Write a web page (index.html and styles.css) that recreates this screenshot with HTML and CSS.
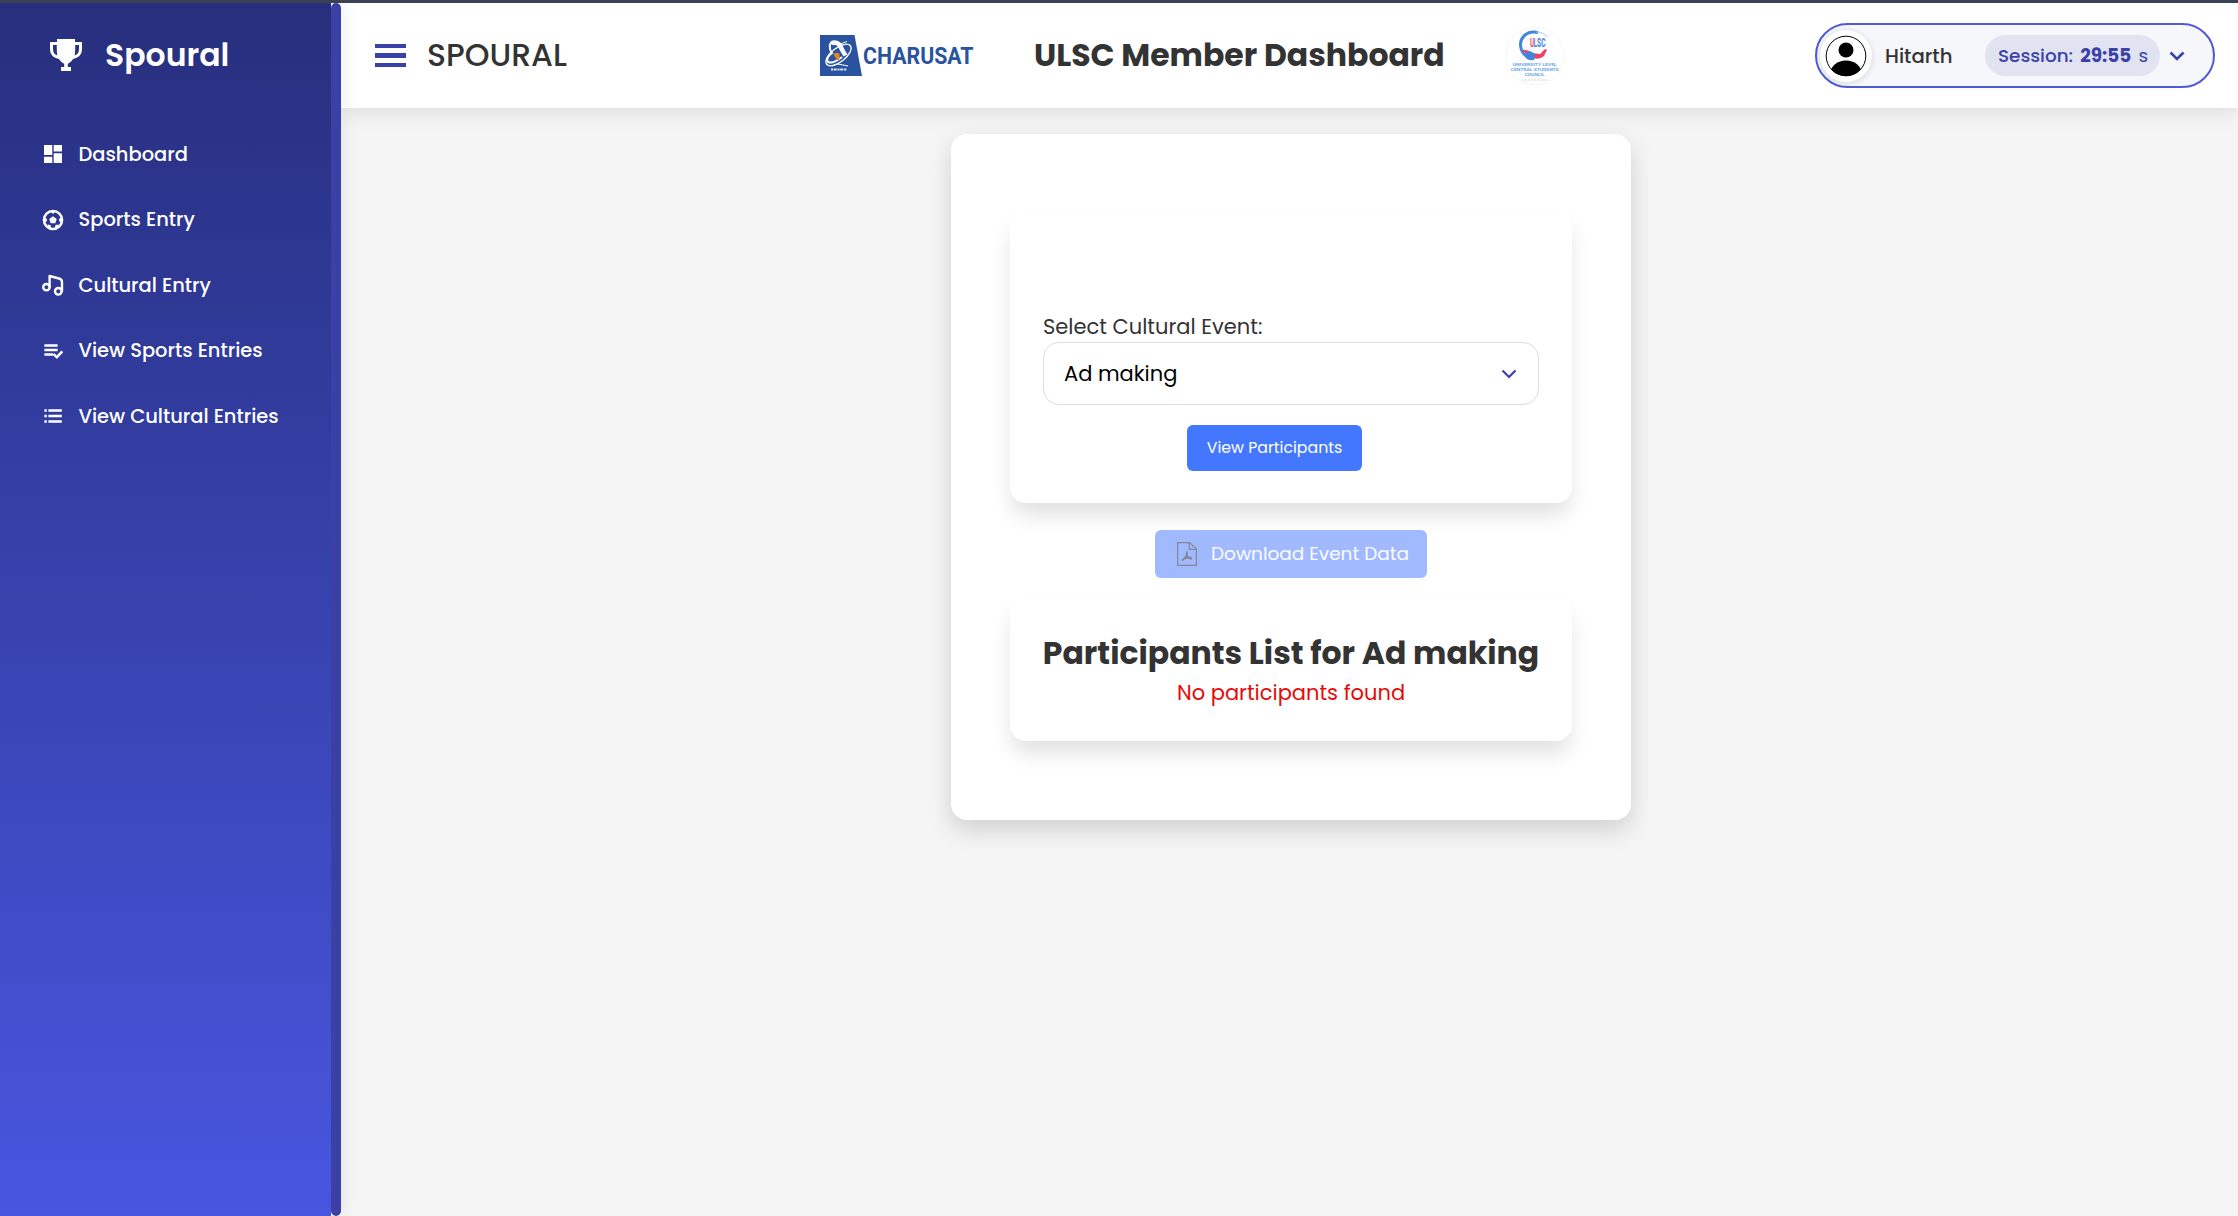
FILE: index.html
```
<!DOCTYPE html>
<html lang="en">
<head>
<meta charset="utf-8">
<title>Spoural</title>
<link rel="stylesheet" href="styles.css">
</head>
<body>
<div class="app">
  <aside class="sidebar">
    <div class="sidebar-inner">
      <div class="brand">
        <svg class="trophy" viewBox="0 0 32 32"><path fill="#fff" d="M7 0h18v3h7v7c0 6-4 9-9 10-1.500 2.600-3.500 4-5.200 4.700V28H21v4H11v-4h3.200v-3.300C12.500 24 10.500 22.600 9 20 4 19 0 16 0 10V3h7zM3 6v4c0 3.500 1.500 5.500 4.300 6.500C6.800 13 6.700 9 6.800 6zm22.200 0c.1 3 0 7-.5 10.500C27.500 15.500 29 13.500 29 10V6z"/></svg>
        <span class="brand-name">Spoural</span>
      </div>
      <nav class="menu">
        <a class="item"><svg viewBox="0 0 24 24" fill="#fff"><path d="M3 3h8.300v10H3zM12.700 3H21v6.600h-8.300zM12.700 11.300H21V21h-8.300zM3 14.700h8.300V21H3z"/></svg><span>Dashboard</span></a>
        <a class="item"><svg viewBox="0 0 24 24"><circle cx="12" cy="12" r="9.100" fill="none" stroke="#fff" stroke-width="2.500"/><path fill="#fff" d="M12 8.200l3.700 2.700-1.400 4.400H9.700l-1.400-4.400zM9.500 3.300h5L12 5.900zM3.600 9.200l2.600 2-1.200 3.200-1.800-.8zM20.400 9.200l-2.600 2 1.200 3.200 1.800-.8zM6.500 16.600l3 .5.7 3.300-3-.8zM17.500 16.600l-3 .5-.7 3.300 3-.8z"/></svg><span>Sports Entry</span></a>
        <a class="item"><svg viewBox="0 0 24 24" fill="none" stroke="#fff" stroke-width="2.400"><circle cx="5.400" cy="14.200" r="3.200"/><circle cx="17.300" cy="18.300" r="3.300"/><path stroke-linejoin="round" d="M8.600 14.200V3l9.400 2.500q3 .8 3 3.500v9.500"/></svg><span>Cultural Entry</span></a>
        <a class="item"><svg viewBox="0 0 24 24" fill="none" stroke="#fff" stroke-width="2.500"><path d="M3.400 6.500h13.200M3.400 11h13.200M3.400 15.500h8.800M12.600 15.200l3.200 3 5.500-5.900"/></svg><span>View Sports Entries</span></a>
        <a class="item"><svg viewBox="0 0 24 24" fill="none" stroke="#fff" stroke-width="2.500"><path d="M3.400 6.500h2.400M7.400 6.500h13.400M3.400 12h2.400M7.400 12h13.400M3.400 17.500h2.400M7.400 17.500h13.400"/></svg><span>View Cultural Entries</span></a>
      </nav>
    </div>
    <div class="scroll-track"><div class="scroll-thumb"></div></div>
  </aside>
  <div class="page">
    <header class="topbar">
      <div class="left">
        <div class="burger"><i></i><i></i><i></i></div>
        <span class="app-name">SPOURAL</span>
      </div>
      <div class="middle">
        <div class="charusat">
          <svg viewBox="0 0 42 41"><path fill="#2a539f" d="M0 0h34.500L42 41H0z"/><ellipse cx="18.500" cy="20" rx="15" ry="7" transform="rotate(-38 18.500 20)" fill="none" stroke="#fff" stroke-width="1.300"/><path fill="none" stroke="#fff" stroke-width="4.500" d="M11.500 9.500c1-3 7-2.500 9 2 1.500 4 4 7 5 9"/><path fill="none" stroke="#fff" stroke-width="2" d="M10 9q-1 5 2 9c-4 2-6 7-4 9 4 2 9-1 14-5"/><path fill="none" stroke="#fff" stroke-width="1" d="M20 9l7-2.500M12 31l6-2 10 2"/><path fill="#e08a1e" d="M13.500 19q4-2.500 6 0v5.500q-2 1-3 0z"/><path stroke="#dfe6f3" stroke-width="2" stroke-dasharray="2 .7 3 .8" d="M11 34.500h16"/></svg>
          <span class="charusat-name">CHARUSAT</span>
        </div>
        <h1>ULSC Member Dashboard</h1>
        <svg class="council" viewBox="0 0 60 60"><circle cx="30" cy="30" r="29" fill="#fff" stroke="#f5f5f5"/><path fill="none" stroke="#3f86dc" stroke-width="3" d="M33 6.500C20 4 13 14 16.500 24c1.500 4 4 6 7 8"/><path fill="none" stroke="#9fc6ef" stroke-width="1" d="M31 6q8 0 11 5"/><path fill="#ea4466" d="M17 24q5-1 10 3l8 1 5-5 2 1-3 6q-4 4-12 2-5-3-10-8z"/><path fill="#3f86dc" d="M20 27l5-2 5 3-1 6q-4 1-7-1z"/><text x="25" y="20.500" font-size="12" textLength="4" lengthAdjust="spacingAndGlyphs" fill="#ea4466" font-weight="700">U</text><text x="28.500" y="20.500" font-size="12" textLength="12" lengthAdjust="spacingAndGlyphs" fill="#3f86dc" font-weight="700">LSC</text><g font-weight="700" font-size="4.400" fill="#69a7e6" text-anchor="middle"><text x="29.700" y="40" textLength="44" lengthAdjust="spacingAndGlyphs">UNIVERSITY LEVEL</text><text x="29.700" y="45.200" textLength="48" lengthAdjust="spacingAndGlyphs">CENTRAL STUDENTS</text><text x="29.700" y="50.400" textLength="20" lengthAdjust="spacingAndGlyphs">COUNCIL</text></g><path stroke="#d0d0d0" stroke-width="1" stroke-dasharray="2 1" d="M17 54h25"/></svg>
      </div>
      <div class="user">
        <div class="avatar"><svg viewBox="0 0 42 42"><defs><clipPath id="face"><circle cx="21" cy="21" r="20"/></clipPath></defs><circle cx="21" cy="21" r="19.800" fill="#fff" stroke="#000" stroke-width="1"/><circle cx="21" cy="15" r="7.500"/><ellipse cx="21" cy="38" rx="15.500" ry="12.500" clip-path="url(#face)"/></svg></div>
        <span class="user-name">Hitarth</span>
        <div class="session"><span>Session:</span><b>29:55</b><span class="unit">s</span></div>
        <svg class="chev" viewBox="0 0 16 10"><path d="M1.500 1.500L8 8l6.500-6.500" fill="none" stroke="#3a41a8" stroke-width="2.600"/></svg>
      </div>
    </header>
    <main class="content">
      <section class="card">
        <div class="panel form">
          <label>Select Cultural Event:</label>
          <div class="select"><span>Ad making</span><svg class="chev" viewBox="0 0 16 10"><path d="M1.500 1.500L8 8l6.500-6.500" fill="none" stroke="#3a41a8" stroke-width="2.200"/></svg></div>
          <button class="view">View Participants</button>
        </div>
        <button class="download"><svg viewBox="0 0 20 24" fill="none" stroke="#848894" stroke-width="1.200"><path d="M.6.6h12L19.400 7v16.400H.6zM12.300.6V7.300h7"/><path stroke-width="1.700" d="M9.700 9.500q1.500 4-4.700 9M9.900 13.500q1.500 3.500 5.200 3.300M6.500 17q3-1.800 8-1.600"/></svg><span>Download Event Data</span></button>
        <div class="panel list">
          <h2>Participants List for Ad making</h2>
          <p>No participants found</p>
        </div>
      </section>
    </main>
  </div>
</div>
</body>
</html>
```
FILE: styles.css
```
* { box-sizing: border-box; }
body {
  margin: 0;
  font-family: Poppins, Inter, sans-serif;
  color: #333;
  background: #f5f5f5;
}
h1, h2, p { margin: 0; }
.app {
  display: flex;
  height: 1216px;
  border-top: 3px solid #3b4254;
  overflow: hidden;
}
.sidebar {
  display: flex;
  width: 341px;
  flex: none;
  z-index: 2;
  box-shadow: 4px 0 16px rgba(0, 0, 0, .06);
}
.sidebar-inner {
  flex: 1;
  color: #fff;
  background: linear-gradient(#272f7d, #4856e0);
}
.scroll-track { width: 10px; background: #fff; }
.scroll-thumb { height: 100%; border-radius: 5px; background: #3a40a6; }
.brand {
  display: flex;
  align-items: center;
  gap: 23px;
  height: 104px;
  padding-left: 50px;
}
.trophy { width: 32px; height: 32px; }
.brand-name { font-size: 31.5px; font-weight: 600; }
.menu { padding-top: 14.5px; }
.item {
  display: flex;
  align-items: center;
  gap: 13.5px;
  height: 65.5px;
  padding-left: 41px;
  font-size: 19.450px;
  font-weight: 500;
}
.item svg { width: 24px; height: 24px; }
.page { flex: 1; display: flex; flex-direction: column; }
.topbar {
  display: flex;
  align-items: center;
  height: 105px;
  padding: 0 23px 0 34px;
  background: #fff;
  box-shadow: 0 4px 20px rgba(0, 0, 0, .1);
}
.left { display: flex; align-items: center; gap: 21px; width: 445px; }
.burger { display: flex; flex-direction: column; gap: 5px; width: 31px; }
.burger i { height: 4.600px; background: #3a41a8; }
.app-name { font-size: 31.5px; font-weight: 500; }
.middle { display: flex; align-items: center; }
.charusat { display: flex; align-items: center; width: 214px; }
.charusat svg { width: 42px; height: 41px; }
.charusat-name {
  width: 110px;
  margin-left: 1px;
  font: 700 24px Roboto, sans-serif;
  color: #2a539f;
  transform: scaleX(.888);
  transform-origin: left;
}
h1 { width: 470.5px; font-size: 31.5px; font-weight: 700; white-space: nowrap; }
.council { width: 60px; height: 60px; font-family: Roboto, sans-serif; }
.user {
  display: flex;
  align-items: center;
  width: 400px;
  height: 65px;
  margin: 0 0 0 auto;
  padding-left: 3px;
  border: 2px solid #4f5bd5;
  border-radius: 33px;
  background: #f5f7fb;
}
.avatar {
  display: flex;
  align-items: center;
  justify-content: center;
  width: 52px;
  height: 52px;
  border-radius: 50%;
  background: #fff;
  box-shadow: 0 1px 6px rgba(0, 0, 0, .14);
}
.avatar svg { width: 42px; height: 42px; }
.user-name { width: 100px; margin-left: 13px; font-size: 19.700px; font-weight: 500; }
.session {
  display: flex;
  align-items: center;
  justify-content: space-between;
  width: 175px;
  height: 41px;
  padding: 0 12px 0 13px;
  border-radius: 21px;
  font-size: 18.400px;
  font-weight: 500;
  color: #3a41a8;
  background: #e1e3f1;
}
.session b { font-weight: 700; }
.unit { font-weight: 400; }
.chev { width: 16px; height: 10px; margin-left: 9px; }
.content { display: flex; justify-content: center; padding-top: 26px; }
.card {
  display: flex;
  flex-direction: column;
  align-items: center;
  width: 680px;
  height: 686px;
  padding-top: 76px;
  margin-left: 3px;
  border-radius: 16px;
  background: #fff;
  box-shadow: 0 10px 24px rgba(0, 0, 0, .15);
}
.panel {
  width: 562px;
  border-radius: 16px;
  background: #fff;
  box-shadow: 0 14px 22px -3px rgba(0, 0, 0, .13);
}
.form { height: 293px; padding: 101px 33px 32px; }
.form label { display: block; line-height: 31px; font-size: 21px; }
.select {
  display: flex;
  align-items: center;
  justify-content: space-between;
  height: 63px;
  padding: 0 21px 0 20px;
  border: 1px solid #ddd;
  border-radius: 16px;
  font-size: 21px;
  color: #000;
}
button { padding: 0; border: 0; border-radius: 6px; font-family: inherit; color: #fff; }
.view {
  display: block;
  width: 175px;
  height: 46px;
  margin: 20px 0 0 144px;
  padding-bottom: 1px;
  font-size: 15.750px;
  background: #4477ff;
}
.download {
  display: flex;
  align-items: center;
  gap: 14px;
  width: 272px;
  height: 48px;
  margin: 27px 0 19px;
  padding: 0 0 1px 22px;
  font-size: 18.500px;
  color: #fbfcff;
  background: #a1b9ff;
}
.download svg { width: 20px; height: 24px; }
.list { height: 144px; padding-top: 34px; text-align: center; }
.list h2 { line-height: 44px; font-size: 31.5px; font-weight: 700; white-space: nowrap; }
.list p { line-height: 36px; font-size: 21px; color: #e80909; }
```
